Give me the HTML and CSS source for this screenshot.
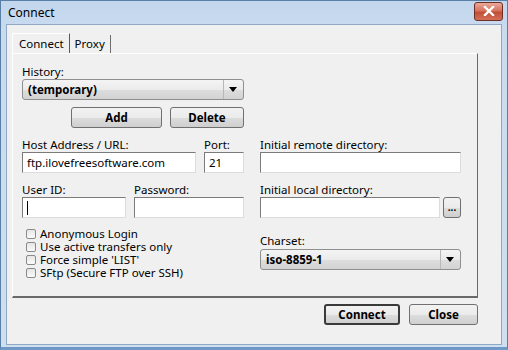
FILE: index.html
```html
<!DOCTYPE html>
<html lang="en">
<head>
    <meta charset="UTF-8">
    <title>Connect</title>
    <link rel="stylesheet" href="styles.css">
</head>
<body>
    <div class="window">
        <!-- Title bar -->
        <div class="titlebar">
            <span class="title">Connect</span>
            <div class="close-btn">
                <svg width="14" height="10" viewBox="0 0 14 10">
                    <path d="M3 1 L11 9 M11 1 L3 9" stroke="#fff" stroke-width="2.4" stroke-linecap="square"/>
                </svg>
            </div>
        </div>

        <div class="client">
            <div class="tabs">
                <div class="tab active">Connect</div>
                <div class="tab">Proxy</div>
            </div>

            <div class="tab-panel">
                <div class="form-grid">
                    <!-- History -->
                    <div class="cell">
                        <label>History:</label>
                        <div class="select">
                            <span class="select-value">(temporary)</span>
                            <span class="select-arrow"></span>
                        </div>
                        <div class="history-buttons">
                            <button class="btn btn-add">Add</button>
                            <button class="btn btn-delete">Delete</button>
                        </div>
                    </div>
                    <div class="cell"></div>

                    <!-- Host / Port -->
                    <div class="cell row">
                        <div class="field host">
                            <label>Host Address / URL:</label>
                            <div class="textbox">ftp.ilovefreesoftware.com</div>
                        </div>
                        <div class="field port">
                            <label>Port:</label>
                            <div class="textbox">21</div>
                        </div>
                    </div>
                    <div class="cell field">
                        <label>Initial remote directory:</label>
                        <div class="textbox"></div>
                    </div>

                    <!-- User / Password -->
                    <div class="cell row">
                        <div class="field user">
                            <label>User ID:</label>
                            <div class="textbox"><span class="caret"></span></div>
                        </div>
                        <div class="field pass">
                            <label>Password:</label>
                            <div class="textbox"></div>
                        </div>
                    </div>
                    <div class="cell field">
                        <label>Initial local directory:</label>
                        <div class="browse-row">
                            <div class="textbox"></div>
                            <button class="btn btn-browse">...</button>
                        </div>
                    </div>

                    <!-- Options / Charset -->
                    <div class="cell checks">
                        <div class="check"><span class="box"></span>Anonymous Login</div>
                        <div class="check"><span class="box"></span>Use active transfers only</div>
                        <div class="check"><span class="box"></span>Force simple 'LIST'</div>
                        <div class="check"><span class="box"></span>SFtp (Secure FTP over SSH)</div>
                    </div>
                    <div class="cell field charset">
                        <label>Charset:</label>
                        <div class="select">
                            <span class="select-value">iso-8859-1</span>
                            <span class="select-arrow"></span>
                        </div>
                    </div>
                </div>
            </div>

            <div class="footer">
                <button class="btn btn-default">Connect</button>
                <button class="btn btn-close">Close</button>
            </div>
        </div>
    </div>
</body>
</html>
```

FILE: styles.css
```css
* {
    box-sizing: border-box;
}

body {
    margin: 0;
    font-family: 'Noto Sans', 'Open Sans', sans-serif;
    font-size: 11.5px;
    color: #000;
}

.window {
    width: 508px;
    height: 350px;
    background: linear-gradient(#c2d6ed, #c9dbef 30px, #cfdff1);
    border: 1px solid #5a7fa6;
    border-bottom: 3px solid #6f98c4;
    padding: 0 5px 2px 5px;
    display: flex;
    flex-direction: column;
}

.titlebar {
    height: 23px;
    display: flex;
    align-items: center;
    justify-content: space-between;
}

.title {
    font-size: 12px;
    padding-left: 2px;
    margin-top: -1px;
}

.close-btn {
    width: 29px;
    height: 19px;
    margin-top: -3px;
    margin-right: -1px;
    border: 1px solid #6d2f24;
    border-radius: 3px;
    background: linear-gradient(#e9a99b, #d6735f 45%, #c24e35 55%, #d3705a);
    display: flex;
    align-items: center;
    justify-content: center;
}

.client {
    flex: 1;
    background: #f0f0f0;
    border: 1px solid #8fa8c4;
    padding: 7px 23px 0 5px;
    display: flex;
    flex-direction: column;
}

.tabs {
    display: flex;
    height: 21px;
    align-items: flex-end;
}

.tab {
    height: 18px;
    padding: 1px 5px 0 5px;
    font-size: 11.5px;
    border-right: 1px solid #6f6f6f;
}

.tab.active {
    height: 20px;
    padding-top: 2px;
    border-left: 1px solid #fff;
    border-top: 1px solid #fff;
    border-right: 1px solid #5a5a5a;
    padding-left: 6px;
    padding-right: 5px;
}

.tab-panel {
    height: 245px;
    border-top: 1px solid #fff;
    border-left: 1px solid #fff;
    border-right: 1px solid #696969;
    border-bottom: 2px solid #696969;
    padding: 11px 0 0 9px;
}

.form-grid {
    display: grid;
    grid-template-columns: 222px 201px;
    column-gap: 16px;
}

.cell {
    display: flex;
    flex-direction: column;
}

.row {
    flex-direction: row;
    gap: 8px;
}

.field {
    display: flex;
    flex-direction: column;
}

label {
    display: block;
    font-size: 11.5px;
    height: 14px;
    line-height: 14px;
}

.select {
    height: 21px;
    border: 1px solid #8e8f8f;
    border-radius: 3px;
    background: linear-gradient(#f4f4f4, #ebebeb 50%, #dddddd 51%, #d3d3d3);
    display: flex;
    align-items: center;
    font-weight: bold;
    font-size: 11.5px;
}

.select-value {
    flex: 1;
    padding-left: 5px;
}

.select-arrow {
    width: 20px;
    height: 19px;
    border-left: 1px solid #b8b8b8;
    position: relative;
}

.select-arrow::after {
    content: "";
    position: absolute;
    left: 5px;
    top: 7px;
    border-left: 4px solid transparent;
    border-right: 4px solid transparent;
    border-top: 5px solid #000;
}

.history-buttons {
    display: flex;
    justify-content: flex-end;
    gap: 8px;
    margin-top: 7px;
}

.btn {
    height: 21px;
    font-family: inherit;
    font-size: 11.5px;
    font-weight: bold;
    border: 1px solid #707070;
    border-radius: 3px;
    background: linear-gradient(#f2f2f2, #ebebeb 50%, #dddddd 51%, #cfcfcf);
    padding: 0;
    color: #000;
}

.btn-add {
    width: 91px;
}

.btn-delete {
    width: 74px;
}

.row,
.cell.field {
    margin-top: 10px;
}

.textbox {
    height: 21px;
    background: #fff;
    border-top: 1px solid #7b7b7b;
    border-left: 1px solid #7b7b7b;
    border-right: 1px solid #dcdcdc;
    border-bottom: 1px solid #dcdcdc;
    font-size: 11.5px;
    padding: 2px 4px;
    white-space: nowrap;
    overflow: hidden;
}

.host {
    width: 174px;
}

.port {
    width: 40px;
}

.user {
    width: 104px;
}

.pass {
    width: 110px;
}

.caret {
    display: inline-block;
    width: 1px;
    height: 14px;
    background: #000;
    margin-top: 1px;
}

.browse-row {
    display: flex;
    gap: 3px;
}

.browse-row .textbox {
    flex: 1;
}

.btn-browse {
    width: 18px;
    height: 21px;
    font-size: 10px;
    line-height: 10px;
    padding-bottom: 2px;
}

.checks {
    margin-top: 9px;
    padding-left: 4px;
}

.check {
    display: flex;
    align-items: center;
    height: 13px;
    line-height: 13px;
    font-size: 11.5px;
}

.box {
    width: 10px;
    height: 10px;
    border: 1px solid #8a8a8a;
    border-radius: 2px;
    background: linear-gradient(#e6e6e6, #fafafa);
    margin-right: 4px;
}

.cell.field.charset {
    margin-top: 16px;
}

.charset .select {
    margin-top: 1px;
}

.footer {
    display: flex;
    justify-content: flex-end;
    gap: 9px;
    padding-top: 6px;
}

.btn-default {
    width: 76px;
    border: 2px solid #3a3a3a;
}

.btn-close {
    width: 69px;
}
```
